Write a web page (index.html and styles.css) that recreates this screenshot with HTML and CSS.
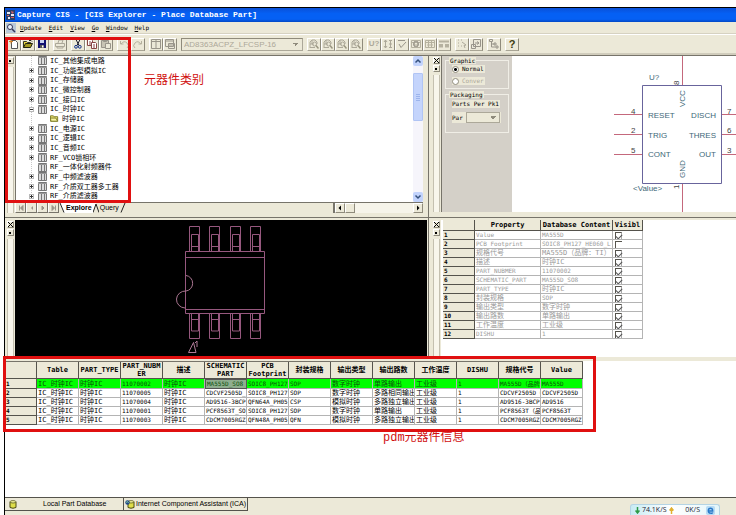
FILE: index.html
```html
<!DOCTYPE html>
<html lang="zh-CN">
<head>
    <meta charset="UTF-8">
    <meta name="viewport" content="width=device-width, initial-scale=1.0">
    <title>Capture CIS - [CIS Explorer - Place Database Part]</title>
    <link rel="stylesheet" href="styles.css">
</head>
<body>
    <svg class="defs" aria-hidden="true">
        <symbol id="i-table" viewBox="0 0 9 9">
            <path d="M0.5 0.5h8v8h-8z" fill="#dcdcdc" stroke="#777"/>
            <path d="M3.5 0v9M6.5 0v9" stroke="#777" fill="none"/>
            <path d="M0 1.5h9" stroke="#999" fill="none"/>
        </symbol>
        <symbol id="i-folder" viewBox="0 0 10 9">
            <path d="M0.5 1.5h3l1 1h4v5h-8z" fill="#e8e070" stroke="#777722"/>
            <path d="M1 7.500l-0.500-3.500h6l2 3.500z" fill="#f8f4a0" stroke="#777722"/>
        </symbol>
        <symbol id="i-zoom" viewBox="0 0 10 10">
            <path d="M1 9V3l2-2h3l2 2v2M1 5h4M3 1v4M1 8.500h5" fill="none" stroke="#aca899"/>
            <circle cx="5.500" cy="5" r="2" fill="none" stroke="#aca899"/>
            <path d="M7 6.500l2.500 3" stroke="#999580" stroke-width="1.500"/>
        </symbol>
        <symbol id="i-grid" viewBox="0 0 10 10">
            <path d="M0.500 1.500h9v7h-9zM0.500 3.500h9M3.500 1v7M6.500 1v7M2 6h6" fill="none" stroke="#b5b19f"/>
        </symbol>
        <symbol id="i-db" viewBox="0 0 8 9">
            <path d="M1 2v5.500q3 1.500 6 0V2z" fill="#dede4a" stroke="#4a4a10"/>
            <ellipse cx="4" cy="1.800" rx="3" ry="1.200" fill="#f6f6a0" stroke="#4a4a10" stroke-width="0.700"/>
        </symbol>
    </svg>

    <div class="window">
        <header class="titlebar">
            <svg class="app-icon" viewBox="0 0 9 10"><path d="M0 0h9v10H0z" fill="#28406c"/><path d="M1 2h3v2H1zM5 4h3v2H5zM2 7h2v2H2z" fill="#e8e8f0"/><path d="M5 1l3 1-2 2zM1 5h2v1H1zM5 7h3v1H5z" fill="#d86060"/></svg>
            <h1>Capture CIS - [CIS Explorer - Place Database Part]</h1>
        </header>

        <nav class="menubar">
            <svg class="menu-icon" viewBox="0 0 10 10"><path d="M0 0h10v10H0z" fill="#b8c8d8"/><circle cx="4" cy="4" r="2.500" fill="#eef6ff" stroke="#335"/><path d="M6 6l3 3" stroke="#335" stroke-width="1.500"/></svg>
            <a href="#"><u>U</u>pdate</a>
            <a href="#"><u>E</u>dit</a>
            <a href="#"><u>V</u>iew</a>
            <a href="#"><u>G</u>o</a>
            <a href="#"><u>W</u>indow</a>
            <a href="#"><u>H</u>elp</a>
        </nav>

        <div class="toolbar">
            <div class="tool-group">
                <button aria-label="New"><svg viewBox="0 0 10 10"><path d="M2.500 1.500h4l2 2v6h-6z" fill="#fff" stroke="#555"/><path d="M0 2.500h4M2 0.500v4" stroke="#d88020"/></svg></button>
                <button aria-label="Open"><svg viewBox="0 0 10 10"><path d="M0.500 8.500v-6h3l1 1h3v2" fill="#e8d840" stroke="#332"/><path d="M0.500 8.500l2-4h7l-2 4z" fill="#a09820" stroke="#221"/><path d="M6 1.500h2l1 1" fill="none" stroke="#222"/></svg></button>
                <button aria-label="Save"><svg viewBox="0 0 10 10"><path d="M1 1h8v8H1z" fill="#101070"/><path d="M3 1h4v3H3z" fill="#c8d0f0"/><path d="M3 6h4v3H3z" fill="#555"/><path d="M5 6.500h1.500v2H5z" fill="#fff"/></svg></button>
            </div>
            <div class="tool-group">
                <button disabled aria-label="Print"><svg viewBox="0 0 10 10"><path d="M3 4l1-3h4L7 4M0.500 4.500h9v3h-9zM2 7.500v1.500h6V7.500" fill="none" stroke="#aca899"/></svg></button>
            </div>
            <div class="tool-group">
                <button aria-label="Cut"><svg viewBox="0 0 10 10"><path d="M3 0.500l3 6M7 0.500l-3 6" stroke="#223" fill="none"/><circle cx="3" cy="7.800" r="1.400" fill="none" stroke="#113088"/><circle cx="6.800" cy="7.800" r="1.400" fill="none" stroke="#113088"/></svg></button>
                <button aria-label="Copy"><svg viewBox="0 0 10 10"><path d="M0.500 0.500h4l1 1v5h-5z" fill="#fff" stroke="#844"/><path d="M4.500 3.500h4l1 1v5h-5z" fill="#fff" stroke="#844"/><path d="M2 3h2M2 5h2M6 6h2M6 8h2" stroke="#844"/></svg></button>
                <button disabled aria-label="Paste"><svg viewBox="0 0 10 10"><path d="M0.500 1.500h7v7h-7zM2.500 0.500h3v2h-3z" fill="#c8c4b4" stroke="#99958a"/><path d="M4.500 4.500h5v5h-5z" fill="#ece9d8" stroke="#99958a"/></svg></button>
            </div>
            <div class="tool-group">
                <button disabled aria-label="Undo"><svg viewBox="0 0 10 10"><path d="M1.500 2v3h3M2 5q3-4 6-1t0 5" fill="none" stroke="#b5b19f"/></svg></button>
                <button disabled aria-label="Redo"><svg viewBox="0 0 10 10"><path d="M8.500 2v3h-3M8 5q-3-4-6-1t0 5" fill="none" stroke="#b5b19f"/></svg></button>
            </div>
            <div class="tool-group">
                <button disabled aria-label="Split window"><svg viewBox="0 0 10 10"><path d="M0.500 0.500h9v9h-9zM5 1v8M0 2.500h10" fill="none" stroke="#99958a"/></svg></button>
                <button disabled aria-label="Cascade window"><svg viewBox="0 0 10 10"><path d="M0.500 0.500h8v7h-8zM0 2h9M3.500 4.500h6v5h-6zM3 6h7" fill="none" stroke="#99958a"/></svg></button>
            </div>
            <select class="part-select" disabled aria-label="Part">
                <option>AD8363ACPZ_LFCSP-16</option>
            </select>
            <div class="tool-group">
                <button disabled aria-label="Zoom in"><svg viewBox="0 0 10 10"><use href="#i-zoom"/></svg></button>
                <button disabled aria-label="Zoom out"><svg viewBox="0 0 10 10"><use href="#i-zoom"/></svg></button>
                <button disabled aria-label="Zoom area"><svg viewBox="0 0 10 10"><use href="#i-zoom"/></svg></button>
                <button disabled aria-label="Zoom all"><svg viewBox="0 0 10 10"><use href="#i-zoom"/></svg></button>
            </div>
            <div class="tool-group">
                <button disabled class="tool-text">U?</button>
                <button disabled aria-label="Gate swap"><svg viewBox="0 0 10 10"><path d="M2.500 1v8M1 3l1.500-2L4 3M1 7l1.500 2L4 7M6 1.500h3M6 5h3M6 8.500h3M7.500 1v7" fill="none" stroke="#aca899"/></svg></button>
                <button disabled aria-label="Check rules"><svg viewBox="0 0 10 10"><path d="M1 1.500h7M2 5l2 3.500L9 3" fill="none" stroke="#99958a"/></svg></button>
                <button disabled aria-label="Netlist"><svg viewBox="0 0 10 10"><use href="#i-grid"/><circle cx="5" cy="5" r="2.500" fill="none" stroke="#99958a"/></svg></button>
                <button disabled aria-label="Cross reference"><svg viewBox="0 0 10 10"><use href="#i-grid"/></svg></button>
                <button disabled aria-label="Bill of materials"><svg viewBox="0 0 10 10"><path d="M0 1.500h10v2H0zM0 5h4v3.500H0zM6 5h4v3.500H6z" fill="#b5b19f"/></svg></button>
            </div>
            <div class="tool-group">
                <button disabled aria-label="Snap"><svg viewBox="0 0 10 10"><path d="M1 1h1M4 1h1M1 4h1M1 7h1M4 7h1M5 3l4 3-2 0.500 1 2.500" fill="none" stroke="#aca899"/></svg></button>
                <button disabled aria-label="Drag"><svg viewBox="0 0 10 10"><path d="M2.500 0.500h7v7h-7zM0.500 5.500h4v4h-4zM4 4h4M6 2.500L8 4 6 5.500" fill="none" stroke="#99958a"/></svg></button>
            </div>
            <div class="tool-group">
                <button disabled aria-label="Project"><svg viewBox="0 0 10 10"><path d="M0.500 0.500h3v2h-3zM2.500 3v5h4M2.500 5h3M5 4h2v2H5zM7 7h2v2H7z" fill="none" stroke="#99958a"/></svg></button>
            </div>
            <div class="tool-group">
                <button class="tool-help">?</button>
            </div>
        </div>

        <main class="workspace">
            <section class="pane explorer">
                <div class="grip"><button aria-label="Collapse" class="pin"></button></div>
                <div class="explorer-body">
                    <div class="tree-row">
                        <ul class="tree">
                            <li><span class="no-expand"></span><svg><use href="#i-table"/></svg>IC_其他集成电路</li>
                            <li><button class="expand" aria-label="Expand"></button><svg><use href="#i-table"/></svg>IC_功能型模拟IC</li>
                            <li><button class="expand" aria-label="Expand"></button><svg><use href="#i-table"/></svg>IC_存储器</li>
                            <li><button class="expand" aria-label="Expand"></button><svg><use href="#i-table"/></svg>IC_微控制器</li>
                            <li><button class="expand" aria-label="Expand"></button><svg><use href="#i-table"/></svg>IC_接口IC</li>
                            <li><button class="expand open" aria-label="Collapse"></button><svg><use href="#i-table"/></svg>IC_时钟IC</li>
                            <li class="child"><svg><use href="#i-folder"/></svg>时钟IC</li>
                            <li><button class="expand" aria-label="Expand"></button><svg><use href="#i-table"/></svg>IC_电源IC</li>
                            <li><button class="expand" aria-label="Expand"></button><svg><use href="#i-table"/></svg>IC_逻辑IC</li>
                            <li><button class="expand" aria-label="Expand"></button><svg><use href="#i-table"/></svg>IC_音频IC</li>
                            <li><button class="expand" aria-label="Expand"></button><svg><use href="#i-table"/></svg>RF_VCO锁相环</li>
                            <li><span class="no-expand"></span><svg><use href="#i-table"/></svg>RF_一体化射频器件</li>
                            <li><button class="expand" aria-label="Expand"></button><svg><use href="#i-table"/></svg>RF_中频滤波器</li>
                            <li><button class="expand" aria-label="Expand"></button><svg><use href="#i-table"/></svg>RF_介质双工器多工器</li>
                            <li><button class="expand" aria-label="Expand"></button><svg><use href="#i-table"/></svg>RF_介质滤波器</li>
                        </ul>
                        <div class="vscroll">
                            <button aria-label="Scroll up"><svg viewBox="0 0 8 8"><path d="M1.500 5.500L4 3l2.500 2.500" fill="none" stroke="#35507c" stroke-width="1.500"/></svg></button>
                            <div class="vthumb"></div>
                            <button aria-label="Scroll down"><svg viewBox="0 0 8 8"><path d="M1.500 2.500L4 5l2.500-2.500" fill="none" stroke="#35507c" stroke-width="1.500"/></svg></button>
                        </div>
                    </div>
                    <div class="tab-row">
                        <div class="tab-nav">
                            <button disabled aria-label="First"><svg viewBox="0 0 8 8"><path d="M2.500 1.500v5M6 1.500L3.500 4 6 6.500z" fill="#99958a" stroke="#99958a"/></svg></button>
                            <button disabled aria-label="Previous"><svg viewBox="0 0 8 8"><path d="M5 2L3 4l2 2z" fill="#99958a"/></svg></button>
                            <button disabled aria-label="Next"><svg viewBox="0 0 8 8"><path d="M3 2l2 2-2 2z" fill="#99958a" stroke="#99958a"/></svg></button>
                            <button disabled aria-label="Last"><svg viewBox="0 0 8 8"><path d="M5.500 1.500v5M2 1.500L4.500 4 2 6.500z" fill="#99958a" stroke="#99958a"/></svg></button>
                        </div>
                        <svg class="slant" viewBox="0 0 6 10"><path d="M0 0h6v10H5z" fill="#fff"/><path d="M1 0l4 9.500" stroke="#222"/></svg>
                        <a href="#" class="tab active">Explore</a>
                        <svg class="slant" viewBox="0 0 6 10"><path d="M0 0h3L0 9z" fill="#fff"/><path d="M0 9.500L3 1l3 8.500" stroke="#222" fill="none"/></svg>
                        <a href="#" class="tab">Query</a>
                        <svg class="slant" viewBox="0 0 6 10"><path d="M1 9.500L5 0" stroke="#222"/></svg>
                        <div class="hscroll">
                            <button aria-label="Scroll left"><svg viewBox="0 0 8 8"><path d="M5 1.500L2.500 4 5 6.500z"/></svg></button>
                            <div class="hthumb"></div>
                            <button aria-label="Scroll right"><svg viewBox="0 0 8 8"><path d="M3 1.500L5.500 4 3 6.500z"/></svg></button>
                        </div>
                    </div>
                </div>
                <div class="callout callout-tree"></div>
                <p class="callout-text text-tree">元器件类别</p>
            </section>

            <section class="pane symbol">
                <div class="grip"><button class="close" aria-label="Close"></button><button class="pin" aria-label="Pin"></button></div>
                <form class="options">
                    <fieldset>
                        <legend>Graphic</legend>
                        <label><input type="radio" name="graphic" checked> Normal</label>
                        <label class="off"><input type="radio" name="graphic" disabled> Conver</label>
                    </fieldset>
                    <fieldset class="packaging">
                        <legend>Packaging</legend>
                        <span class="plain">Parts Per Pk1</span>
                        <label>Par <select class="par-select" disabled><option></option></select></label>
                    </fieldset>
                </form>
                <div class="canvas">
                    <svg width="225" height="157" viewBox="511 55 225 157">
                        <g stroke="#c4687c" fill="none">
                            <path d="M681.500 55v29M681.500 182v30M613 113.500h28M613 133.500h28M613 153.500h28M721 113.500h16M721 133.500h16M721 153.500h16"/>
                        </g>
                        <path d="M641.500 84.500h79v98h-79z" fill="none" stroke="#68649c"/>
                        <g class="pin-name">
                            <text x="648" y="79">U?</text>
                            <text x="647" y="117">RESET</text>
                            <text x="647" y="137">TRIG</text>
                            <text x="647" y="156">CONT</text>
                            <text x="715" y="117" text-anchor="end">DISCH</text>
                            <text x="715" y="137" text-anchor="end">THRES</text>
                            <text x="715" y="156" text-anchor="end">OUT</text>
                            <text x="632" y="190">&lt;Value&gt;</text>
                            <text transform="translate(684 106) rotate(-90)">VCC</text>
                            <text transform="translate(684 177) rotate(-90)">GND</text>
                        </g>
                        <g class="pin-no">
                            <text x="630" y="113">4</text>
                            <text x="630" y="132">2</text>
                            <text x="630" y="152">5</text>
                            <text x="726" y="113">7</text>
                            <text x="726" y="132">6</text>
                            <text x="726" y="152">3</text>
                            <text transform="translate(678 84) rotate(-90)">8</text>
                            <text transform="translate(678 188) rotate(-90)">1</text>
                        </g>
                    </svg>
                </div>
            </section>

            <section class="pane footprint">
                <div class="grip"><button class="close" aria-label="Close"></button><button class="pin" aria-label="Pin"></button></div>
                <div class="board">
                    <svg width="412" height="136" viewBox="15 220 412 136" fill="none" stroke="#96587e">
                        <g id="pads-top">
                            <path d="M189.500 251.500v-25h10v25M191.500 251.500v-17h7v17M191.500 246.500h7"/>
                            <path d="M209.500 251.500v-25h10v25M211.500 251.500v-17h7v17M211.500 246.500h7"/>
                            <path d="M230.500 251.500v-25h10v25M232.500 251.500v-17h7v17M232.500 246.500h7"/>
                            <path d="M250.500 251.500v-25h10v25M252.500 251.500v-17h7v17M252.500 246.500h7"/>
                        </g>
                        <g id="pads-bottom">
                            <path d="M189.500 313.500h10v25h-10zM191.500 314v17h7v-17M191.500 319.500h7"/>
                            <path d="M209.500 313.500h10v25h-10zM211.500 314v17h7v-17M211.500 319.500h7"/>
                            <path d="M230.500 313.500h10v25h-10zM232.500 314v17h7v-17M232.500 319.500h7"/>
                            <path d="M250.500 313.500h10v25h-10zM252.500 314v17h7v-17M252.500 319.500h7"/>
                        </g>
                        <path d="M185.500 251.500h79v62h-79zM185.500 257.500h79M185.500 309.500h79"/>
                        <path d="M186 275.500a7.500 7.800 0 0 1 0 15.500a9 8.500 0 0 0 -1 17" stroke="#a8748f"/>
                        <path d="M188.500 352.500l5-10 2.500 10zM195 343l2-2v6" stroke="#b07a98"/>
                    </svg>
                </div>
            </section>

            <section class="pane properties">
                <div class="grip"><button class="close" aria-label="Close"></button><button class="pin" aria-label="Pin"></button></div>
                <div class="sheet">
                    <table class="grid prop-grid">
                        <thead>
                            <tr><th class="num"></th><th class="name">Property</th><th class="content">Database Content</th><th class="vis">Visibl</th></tr>
                        </thead>
                        <tbody>
                            <tr><th>1</th><td>Value</td><td>MA555D</td><td><input type="checkbox" aria-label="Value" checked></td></tr>
                            <tr><th>2</th><td>PCB Footprint</td><td>SOIC8_PH127_HE060_L</td><td><input type="checkbox" aria-label="PCB Footprint"></td></tr>
                            <tr><th>3</th><td class="cn">规格代号</td><td class="cn">MA555D（品牌：TI）（</td><td><input type="checkbox" aria-label="规格代号" checked></td></tr>
                            <tr><th>4</th><td class="cn">描述</td><td class="cn">时钟IC</td><td><input type="checkbox" aria-label="描述" checked></td></tr>
                            <tr><th>5</th><td>PART_NUBMER</td><td>11070002</td><td><input type="checkbox" aria-label="PART_NUBMER" checked></td></tr>
                            <tr><th>6</th><td>SCHEMATIC_PART</td><td>MA555D_SO8</td><td><input type="checkbox" aria-label="SCHEMATIC_PART" checked></td></tr>
                            <tr><th>7</th><td>PART_TYPE</td><td class="cn">时钟IC</td><td><input type="checkbox" aria-label="PART_TYPE" checked></td></tr>
                            <tr><th>8</th><td class="cn">封装规格</td><td>SOP</td><td><input type="checkbox" aria-label="封装规格" checked></td></tr>
                            <tr><th>9</th><td class="cn">输出类型</td><td class="cn">数字时钟</td><td><input type="checkbox" aria-label="输出类型" checked></td></tr>
                            <tr><th>10</th><td class="cn">输出路数</td><td class="cn">单路输出</td><td><input type="checkbox" aria-label="输出路数" checked></td></tr>
                            <tr><th>11</th><td class="cn">工作温度</td><td class="cn">工业级</td><td><input type="checkbox" aria-label="工作温度" checked></td></tr>
                            <tr><th>12</th><td>DISHU</td><td>1</td><td><input type="checkbox" aria-label="DISHU" checked></td></tr>
                        </tbody>
                    </table>
                </div>
            </section>

            <section class="parts">
                <table class="grid parts-grid">
                    <thead>
                        <tr>
                            <th class="num"></th>
                            <th>Table</th>
                            <th>PART_TYPE</th>
                            <th>PART_NUBM<br>ER</th>
                            <th>描述</th>
                            <th>SCHEMATIC<br>PART</th>
                            <th>PCB<br>Footprint</th>
                            <th>封装规格</th>
                            <th>输出类型</th>
                            <th>输出路数</th>
                            <th>工作温度</th>
                            <th>DISHU</th>
                            <th>规格代号</th>
                            <th>Value</th>
                        </tr>
                    </thead>
                    <tbody>
                        <tr class="selected"><th>1</th><td class="cn">IC_时钟IC</td><td class="cn">时钟IC</td><td>11070002</td><td class="cn">时钟IC</td><td class="focus">MA555D_SO8</td><td>SOIC8_PH127</td><td>SOP</td><td class="cn">数字时钟</td><td class="cn">单路输出</td><td class="cn">工业级</td><td>1</td><td>MA555D（品牌</td><td>MA555D</td></tr>
                        <tr><th>2</th><td class="cn">IC_时钟IC</td><td class="cn">时钟IC</td><td>11070005</td><td class="cn">时钟IC</td><td>CDCVF2505D_</td><td>SOIC8_PH127</td><td>SOP</td><td class="cn">数字时钟</td><td class="cn">多路相同输出</td><td class="cn">工业级</td><td>1</td><td>CDCVF2505D（</td><td>CDCVF2505D</td></tr>
                        <tr><th>3</th><td class="cn">IC_时钟IC</td><td class="cn">时钟IC</td><td>11070004</td><td class="cn">时钟IC</td><td>AD9516-3BCP</td><td>QFN64A_PH05</td><td>CSP</td><td class="cn">模拟时钟</td><td class="cn">多路独立输出</td><td class="cn">工业级</td><td>1</td><td>AD9516-3BCP</td><td>AD9516</td></tr>
                        <tr><th>4</th><td class="cn">IC_时钟IC</td><td class="cn">时钟IC</td><td>11070001</td><td class="cn">时钟IC</td><td>PCF8563T_SO</td><td>SOIC8_PH127</td><td>SOP</td><td class="cn">数字时钟</td><td class="cn">单路输出</td><td class="cn">工业级</td><td>1</td><td>PCF8563T（品</td><td>PCF8563T</td></tr>
                        <tr><th>5</th><td class="cn">IC_时钟IC</td><td class="cn">时钟IC</td><td>11070003</td><td class="cn">时钟IC</td><td>CDCM7005RGZ</td><td>QFN48A_PH05</td><td>QFN</td><td class="cn">模拟时钟</td><td class="cn">多路独立输出</td><td class="cn">工业级</td><td>1</td><td>CDCM7005RGZ</td><td>CDCM7005RGZ</td></tr>
                    </tbody>
                </table>
                <div class="callout callout-parts"></div>
                <p class="callout-text text-parts">pdm元器件信息</p>
            </section>
        </main>

        <footer class="bottom-bar">
            <a href="#" class="source-tab local"><svg viewBox="0 0 8 9"><use href="#i-db"/></svg><span>Local Part Database</span></a>
            <a href="#" class="source-tab ica"><svg class="ica-icon" viewBox="0 0 10 9"><use href="#i-db" x="2" width="8" height="9"/><circle cx="2.500" cy="2.500" r="2.200" fill="#204888"/><path d="M1 2.500l1.500-1 1 1.500" stroke="#7fc8a0" fill="none"/></svg><span>Internet Component Assistant (ICA)</span></a>
            <div class="net-speed">
                <svg viewBox="0 0 5 7"><path d="M2.500 0v5M0.500 3.500l2 2.500 2-2.500" fill="none" stroke="#2f9a48" stroke-width="1.500"/></svg>
                <span>74.1K/S</span>
                <svg viewBox="0 0 5 7"><path d="M2.500 7V2M0.500 3.500l2-2.500 2 2.500" fill="none" stroke="#e0b030" stroke-width="1.500"/></svg>
                <span class="up">0K/S</span>
                <svg class="browser" viewBox="0 0 10 10"><rect width="10" height="10" rx="2" fill="#b8dcf4"/><path d="M2.500 5.500h5q0-3-2.500-3t-2.500 2.700 2.500 2.800 2.300-1" fill="none" stroke="#2878c8" stroke-width="1.500"/></svg>
            </div>
        </footer>
    </div>
</body>
</html>
```
FILE: styles.css
```css
* {
    box-sizing: border-box;
}
body {
    margin: 0;
    background-color: #fff;
    font-family: "DejaVu Sans Mono", "Noto Sans CJK SC", monospace;
    font-size: 6px;
    line-height: 8px;
    color: #000;
}
.defs {
    position: absolute;
    width: 0;
    height: 0;
}
button {
    padding: 0;
    margin: 0;
    border: none;
    background: none;
    font: inherit;
    color: inherit;
    flex: none;
}
a {
    color: inherit;
    text-decoration: none;
}
svg {
    display: block;
    flex: none;
}
.window {
    margin: 7px 0 0 4px;
    height: calc(100vh - 7px);
    border-top: 1px solid #000;
    border-left: 1px solid #000;
    background-color: #ece9d8;
    display: flex;
    flex-direction: column;
}

/* title, menu and toolbar */
.titlebar {
    flex: none;
    height: 14px;
    background: linear-gradient(#0a50d8, #0560f4 40%, #0560f4 80%, #0348c4);
    color: #fff;
    display: flex;
    align-items: center;
    gap: 2px;
    padding-left: 1px;
}
.titlebar h1 {
    margin: 0;
    font-family: "Liberation Mono", monospace;
    font-size: 8px;
    font-weight: bold;
}
.app-icon {
    width: 9px;
    height: 10px;
}
.menubar {
    flex: none;
    height: 12px;
    display: flex;
    align-items: center;
    gap: 7px;
    padding-left: 1px;
    border-bottom: 1px solid #d6d2c2;
}
.menu-icon {
    width: 10px;
    height: 10px;
    margin-right: -3px;
}
.toolbar {
    flex: none;
    height: 21px;
    display: flex;
    align-items: center;
    gap: 4px;
    padding-left: 2px;
    border-top: 1px solid #fff;
    border-bottom: 2px solid #d0ccbc;
}
.tool-group {
    display: flex;
}
.tool-group button {
    width: 14px;
    height: 13px;
    display: flex;
    align-items: center;
    justify-content: center;
    border-right: 1px solid #8f8b7c;
    border-bottom: 1px solid #a8a494;
    border-top: 1px solid #fff;
    border-left: 1px solid #fff;
}
.tool-group svg {
    width: 10px;
    height: 10px;
}
.tool-group .tool-text {
    font-family: "Liberation Sans", Arial, sans-serif;
    font-size: 8px;
    font-weight: bold;
    color: #aca899;
}
.tool-group .tool-help {
    font-family: "Liberation Sans", Arial, sans-serif;
    font-size: 11px;
    font-weight: bold;
    color: #3c3c10;
}
/* the two gradients make the halves of the down arrow */
select {
    appearance: none;
    margin: 0;
    border: 1px solid #aca899;
    border-radius: 0;
    background:
        linear-gradient(45deg, transparent 50%, #8f8b7c 50%) no-repeat right 6px center / 3px 3px,
        linear-gradient(-45deg, transparent 50%, #8f8b7c 50%) no-repeat right 3px center / 3px 3px,
        #ece9d8;
    opacity: 1;
}
.part-select {
    width: 122px;
    height: 13px;
    padding: 0 2px;
    border-top-color: #8f8b7c;
    border-left-color: #8f8b7c;
    font-family: "Liberation Sans", Arial, sans-serif;
    font-size: 8px;
    color: #aca899;
}

/* panes */
.workspace {
    flex: 1;
    min-height: 0;
    display: grid;
    grid-template-columns: minmax(0, 424fr) minmax(0, 307fr);
    grid-template-rows: minmax(0, 162fr) minmax(0, 140fr) minmax(0, 140fr);
}
.pane {
    display: flex;
    min-width: 0;
    border-top: 1px solid #77746a;
}
.explorer {
    position: relative;
    padding-right: 5px;
    padding-bottom: 4px;
    border-right: 1px solid #77746a;
}
.symbol {
    padding-left: 2px;
    padding-bottom: 5px;
}
.footprint {
    padding: 2px 1px 0 0;
    border-right: 1px solid #77746a;
}
.properties {
    padding: 2px 0 0 2px;
}
.grip {
    flex: none;
    width: 10px;
    display: flex;
    flex-direction: column;
    align-items: center;
    gap: 1px;
    padding-top: 1px;
}
.grip::after {
    content: "";
    flex: 1;
    width: 5px;
    margin-top: 2px;
    border: 1px solid #c4c0b0;
    border-width: 0 1px;
    background-color: #f8f6ec;
}
.grip button {
    width: 7px;
    height: 7px;
    border-right: 1px solid #8f8b7c;
    border-bottom: 1px solid #8f8b7c;
    border-top: 1px solid #fff;
    border-left: 1px solid #fff;
}
.close {
    background: linear-gradient(45deg, transparent 42%, #000 42%, #000 58%, transparent 58%), linear-gradient(-45deg, transparent 42%, #000 42%, #000 58%, transparent 58%);
}
.pin {
    background: linear-gradient(#000, #000) no-repeat center / 2px 2px;
}

/* explorer tree */
.explorer-body {
    flex: 1;
    min-width: 0;
    display: flex;
    flex-direction: column;
}
.tree-row {
    flex: 1;
    min-height: 0;
    display: flex;
    background-color: #fff;
    border-left: 1px solid #77746a;
}
.tree {
    flex: 1;
    margin: 0;
    padding: 0 0 1px;
    list-style: none;
    display: flex;
    flex-direction: column;
    font-size: 7px;
    background: repeating-linear-gradient(#c8c8c8 0 1px, transparent 1px 2px) no-repeat 15px 0 / 1px 100%;
}
.tree li {
    flex: 1;
    min-height: 0;
    display: flex;
    align-items: center;
    padding-left: 13px;
    white-space: nowrap;
}
.tree svg {
    width: 9px;
    height: 9px;
    margin: 0 3px 0 4px;
}
.tree .child {
    padding-left: 30px;
}
.expand, .no-expand {
    width: 5px;
    height: 5px;
}
.tree .expand {
    border: 1px solid #b8b8b8;
    background: linear-gradient(#333, #333) no-repeat center / 3px 1px, linear-gradient(#333, #333) no-repeat center / 1px 3px, #fff;
}
.tree .expand.open {
    background: linear-gradient(#333, #333) no-repeat center / 3px 1px, #fff;
}
.vscroll {
    width: 10px;
    display: flex;
    flex-direction: column;
    background-color: #f6f5fb;
}
.vscroll button {
    height: 10px;
    padding: 1px;
    border-radius: 2px;
    background-color: #c2d3fc;
}
.vscroll svg, .hscroll svg, .tab-nav svg {
    width: 8px;
    height: 8px;
}
.vthumb {
    height: 33%;
    margin: 7px 0 auto;
    border: 1px solid #b0c4f4;
    border-radius: 1px;
    background: repeating-linear-gradient(#9cb4ec 0 1px, transparent 1px 2px) no-repeat center / 4px 7px, #c4d4fc;
}
.tab-row {
    flex: none;
    height: 11px;
    display: flex;
    border-top: 1px solid #77746a;
}
.tab-nav {
    display: flex;
}
.tab-nav button {
    width: 11px;
    padding: 1px;
    border-right: 1px solid #77746a;
    border-bottom: 1px solid #77746a;
    border-left: 1px solid #fff;
}
.slant {
    width: 6px;
    height: 10px;
}
.tab {
    padding: 1px 1px 0;
    font-family: "Liberation Sans", Arial, sans-serif;
    font-size: 7px;
}
.tab.active {
    background-color: #fff;
    font-weight: bold;
}
.hscroll {
    width: 22%;
    margin-left: auto;
    display: flex;
    border-left: 2px solid #77746a;
    background-color: #f6f4ea;
}
.hscroll button, .hthumb {
    width: 10px;
    background-color: #ece9d8;
    border: 1px solid #fff;
    border-right-color: #8f8b7c;
    border-bottom-color: #8f8b7c;
}
.hscroll button:last-child {
    margin-left: auto;
}

/* symbol preview */
.options {
    flex: none;
    width: 71px;
    padding: 1px 3px;
    border-left: 1px solid #77746a;
    background-color: #d4d0c8;
}
fieldset {
    min-width: 0;
    margin: 0 0 2px;
    padding: 1px 0 3px 6px;
    border: 1px solid #f0eee6;
    display: flex;
    flex-direction: column;
    align-items: flex-start;
    gap: 4px;
}
fieldset.packaging {
    padding: 2px 0 9px 6px;
}
legend {
    margin-left: -3px;
    padding: 0 1px;
    background-color: #ece9d8;
    line-height: 7px;
}
fieldset label, .plain {
    display: flex;
    align-items: center;
    gap: 3px;
    padding-right: 1px;
    background-color: #ece9d8;
}
.off {
    color: #aca899;
}
input {
    appearance: none;
    margin: 0;
    flex: none;
}
input[type="radio"] {
    width: 7px;
    height: 7px;
    border: 1px solid #8f8b7c;
    border-radius: 50%;
    background-color: #fff;
}
input[type="radio"]:checked {
    background: radial-gradient(#000 0 1px, #fff 2px);
}
.par-select {
    width: 34px;
    height: 11px;
}
.canvas {
    flex: 1;
    min-width: 0;
    overflow: hidden;
    background-color: #fff;
}
.canvas text {
    font-family: "Liberation Sans", Arial, sans-serif;
    font-size: 8px;
}
.pin-name {
    fill: #3e6878;
}
.pin-no {
    fill: #444;
}

/* footprint preview */
.board {
    flex: 1;
    min-width: 0;
    overflow: hidden;
    background-color: #000;
}

/* data grids */
.grid {
    border-collapse: separate;
    border-spacing: 0;
    table-layout: fixed;
}
.grid th, .grid td {
    height: 9px;
    padding: 0 1px;
    overflow: hidden;
    white-space: nowrap;
    text-align: left;
    line-height: 8px;
    border-right: 1px solid #b4b4b4;
    border-bottom: 1px solid #b4b4b4;
}
.grid th {
    background-color: #ece9d8;
    border-right-color: #55534c;
    border-bottom-color: #55534c;
}
.grid thead th {
    font-size: 7px;
    text-align: center;
}
.grid .cn {
    font-size: 7px;
}
.sheet {
    flex: 1;
    min-width: 0;
    padding-left: 2px;
    background-color: #fff;
}
.prop-grid {
    width: 200px;
    color: #9a9a9a;
}
.prop-grid th {
    color: #000;
}
.prop-grid thead th {
    height: 11px;
}
.num {
    width: 32px;
}
.name {
    width: 66px;
}
.content {
    width: 72px;
}
.prop-grid input {
    display: block;
    width: 7px;
    height: 7px;
    margin-left: 1px;
    border-top: 1px solid #55534c;
    border-left: 1px solid #55534c;
    background-color: #fff;
}
.prop-grid input:checked {
    border-right: 1px solid #a8a8a8;
}
.prop-grid input:checked::before {
    content: "";
    display: block;
    width: 5px;
    height: 3px;
    margin-top: 1px;
    border-left: 1px solid #555;
    border-bottom: 1px solid #555;
    transform: rotate(-45deg);
}
.parts {
    position: relative;
    grid-column: 1 / -1;
    background-color: #fff;
    border-top: 4px solid #ece9d8;
}
.parts-grid {
    width: 578px;
    border-top: 1px solid #77746a;
}
.parts-grid thead th {
    height: 17px;
    padding: 0;
}
.selected td {
    background-color: #00ff00;
    color: #0a500a;
}
.grid .focus {
    background-color: #8fae8f;
    border: 1px solid #555;
}

/* red marks over the panes */
.callout {
    position: absolute;
    border: 3px solid #e01010;
    pointer-events: none;
}
.callout-tree {
    left: 0;
    top: -19px;
    width: 126px;
    bottom: 14px;
}
.callout-parts {
    left: -2px;
    top: -5px;
    width: 593px;
    height: 76px;
}
.callout-text {
    position: absolute;
    margin: 0;
    font-family: "Liberation Mono", "Noto Sans CJK SC", monospace;
    font-size: 12px;
    line-height: 14px;
    color: #d01010;
}
.text-tree {
    left: 139px;
    top: 18px;
}
.text-parts {
    left: 378px;
    top: 70px;
}

/* bottom tabs */
.bottom-bar {
    flex: none;
    height: 18px;
    display: flex;
    align-items: flex-start;
    border-top: 1px solid #55534c;
    font-family: "Liberation Sans", Arial, sans-serif;
    font-size: 7px;
}
.source-tab {
    display: flex;
    align-items: center;
    height: 13px;
    white-space: nowrap;
}
.source-tab svg {
    width: 8px;
    height: 9px;
}
.source-tab .ica-icon {
    width: 10px;
}
.local {
    width: 118px;
    padding-left: 4px;
    gap: 26px;
    border-bottom: 1px solid #55534c;
}
.ica {
    padding: 0 1px;
    gap: 1px;
    border: 1px solid #55534c;
    border-top: none;
}
.net-speed {
    align-self: flex-end;
    width: 90px;
    height: 11px;
    margin: 0 16px 0 auto;
    padding: 0 4px;
    display: flex;
    align-items: center;
    gap: 2px;
    border: 1px solid #b4d4e4;
    border-bottom: none;
    border-radius: 3px 3px 0 0;
    background: linear-gradient(90deg, #c8ecf4, #fff 45%, #e4f6fa);
    font-family: "Open Sans", sans-serif;
    color: #223;
}
.net-speed svg {
    width: 5px;
    height: 7px;
}
.net-speed .up {
    margin-left: auto;
}
.net-speed .browser {
    width: 9px;
    height: 9px;
    margin-left: 4px;
}
```
